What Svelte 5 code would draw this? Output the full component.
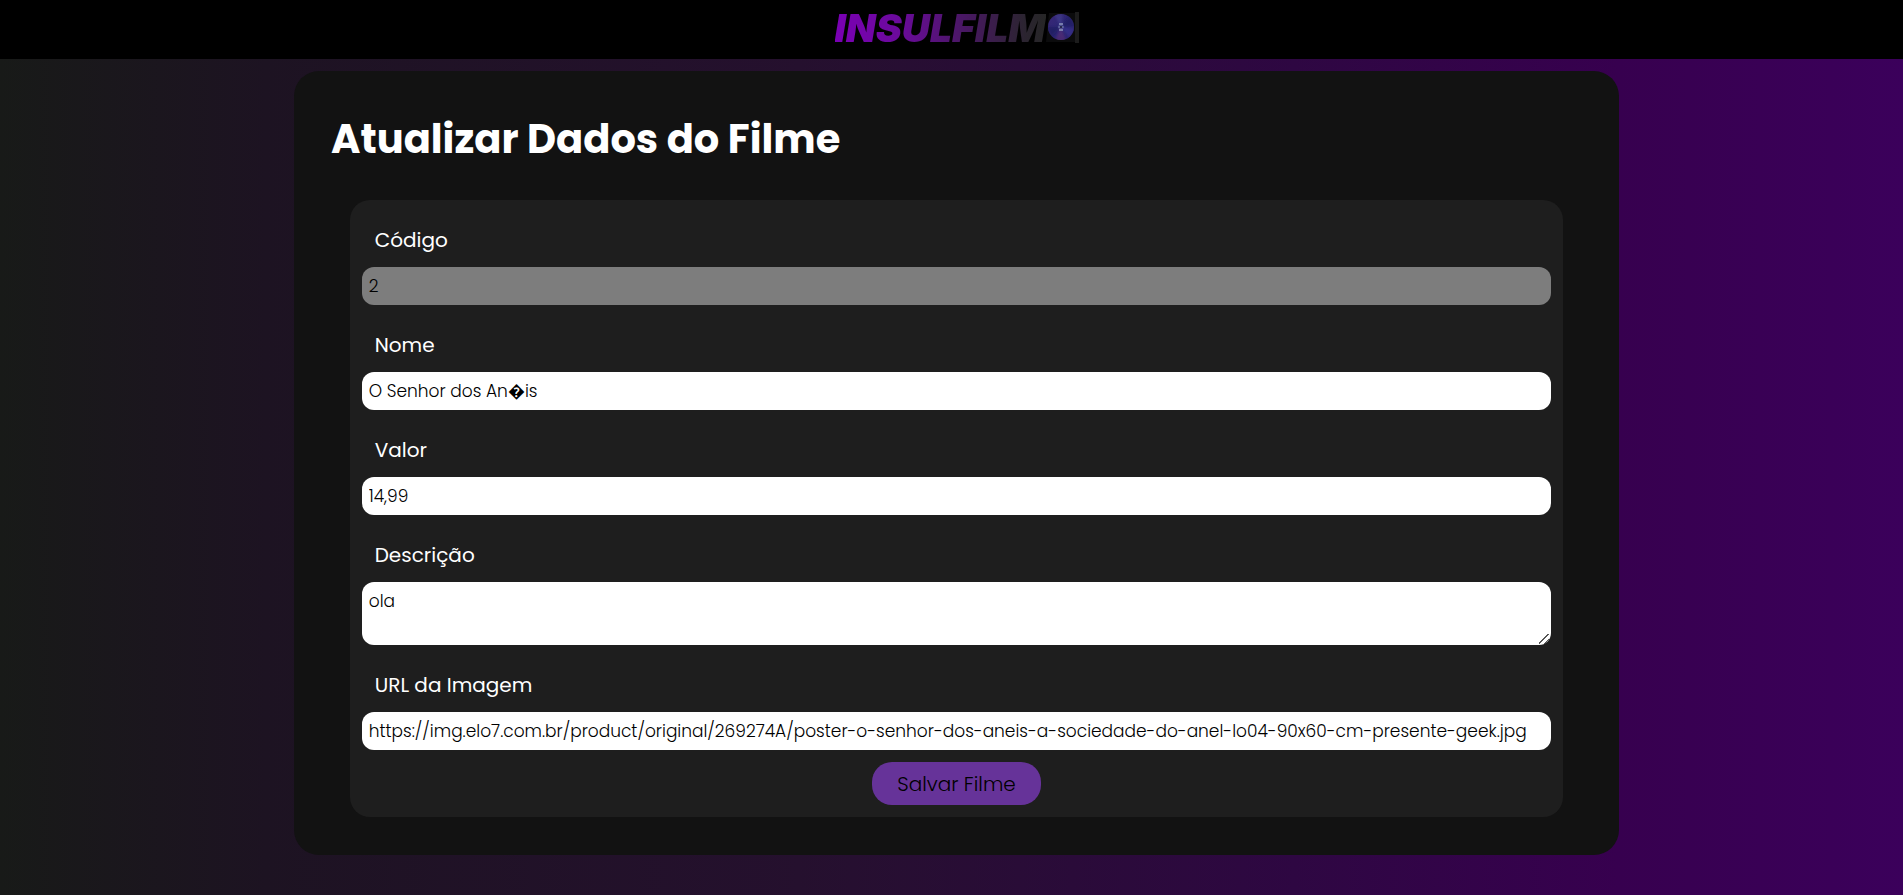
<script>
  let codigo = $state('2');
  let nome = $state('O Senhor dos An\uFFFDis');
  let valor = $state('14,99');
  let descricao = $state('ola');
  let imagem = $state(
    'https://img.elo7.com.br/product/original/269274A/poster-o-senhor-dos-aneis-a-sociedade-do-anel-lo04-90x60-cm-presente-geek.jpg'
  );
</script>

<div class="page">
  <header>
    <a class="logo" href="/" aria-label="Insulfilmo">
      <span class="wordmark">INSULFILM</span>
      <svg class="disc" width="33" height="31" viewBox="0 0 33 31" aria-hidden="true">
        <defs>
          <linearGradient id="disc-base" x1="0" y1="0" x2="1" y2="1">
            <stop offset="0" stop-color="#3f2a80" />
            <stop offset="0.5" stop-color="#29246f" />
            <stop offset="1" stop-color="#2e2478" />
          </linearGradient>
          <radialGradient id="disc-glow">
            <stop offset="0" stop-color="#8f9ac4" stop-opacity="0.7" />
            <stop offset="0.3" stop-color="#30307e" stop-opacity="0.2" />
            <stop offset="1" stop-color="#30246a" stop-opacity="0.3" />
          </radialGradient>
          <filter id="disc-soften" x="-10%" y="-10%" width="120%" height="120%">
            <feGaussianBlur stdDeviation="1" />
          </filter>
          <clipPath id="disc-clip"><circle cx="15" cy="15" r="13" /></clipPath>
        </defs>
        <path d="M3 1H29V30H0Z" fill="#0b0b0c" />
        <circle cx="15" cy="15" r="13" fill="url(#disc-base)" />
        <g clip-path="url(#disc-clip)">
          <g filter="url(#disc-soften)">
            <path d="M15 15 8 2H17Z" fill="#4a4896" opacity="0.6" />
            <path d="M15 15 24 3 29 14Z" fill="#161c5e" opacity="0.8" />
            <path d="M15 15 20 29H9Z" fill="#5c2b74" opacity="0.8" />
            <path d="M15 15H1L5 25Z" fill="#1c185c" opacity="0.8" />
            <path d="M15 15 29 17 24 26Z" fill="#3c38a5" opacity="0.5" />
          </g>
        </g>
        <circle cx="15" cy="15" r="13" fill="url(#disc-glow)" />
        <path d="M13 12h4M13 18h4" stroke="#8d97bd" stroke-width="1.5" />
        <path d="M12 15h6" stroke="#6d74a8" stroke-width="1" />
        <circle cx="15" cy="15" r="1" fill="#11132e" />
        <rect x="29" y="0" width="4" height="31" fill="#1c1c1c" />
      </svg>
    </a>
  </header>

  <main>
    <section class="card">
      <h1>Atualizar Dados do Filme</h1>
      <form onsubmit={(e) => e.preventDefault()}>
        <label for="codigo">Código</label>
        <input id="codigo" type="text" readonly bind:value={codigo} />

        <label for="nome">Nome</label>
        <input id="nome" type="text" bind:value={nome} />

        <label for="valor">Valor</label>
        <input id="valor" type="text" bind:value={valor} />

        <label for="descricao">Descrição</label>
        <textarea id="descricao" rows="2" bind:value={descricao}></textarea>

        <label for="imagem">URL da Imagem</label>
        <input id="imagem" type="text" bind:value={imagem} />

        <button type="submit">Salvar Filme</button>
      </form>
    </section>
  </main>
</div>

<style>
  :global(body) {
    background: #181a18;
  }

  .page {
    box-sizing: border-box;
    min-height: 100vh;
    background: linear-gradient(90deg, #181a18 0%, #1d1322 14%, #25102e 42%, #2e0742 68%, #37004f 85%, #3b005b 100%);
    font-family: Poppins, Inter, "Open Sans", sans-serif;
    color: #fff;
  }

  header {
    display: flex;
    justify-content: center;
    padding: 12px 0 16px 10px;
    background: #000;
  }

  .logo {
    display: flex;
    height: 31px;
    text-decoration: none;
  }

  .wordmark {
    font-family: Inter, sans-serif;
    font-size: 39px;
    font-weight: 900;
    font-style: italic;
    line-height: 31px;
    color: transparent;
    background: linear-gradient(90deg, #7a00b4 0%, #6b0a9c 30%, #481862 62%, #2b2430 90%, #262626 100%);
    background-clip: text;
    -webkit-background-clip: text;
  }

  .disc {
    display: block;
  }

  main {
    padding: 12px 0 40px 10px;
  }

  .card {
    box-sizing: border-box;
    width: 70%;
    margin: 0 auto;
    padding: 38px 37px;
    border-radius: 25px;
    background: #121212;
  }

  h1 {
    margin: 0 0 31px;
    font-size: 40px;
    font-weight: 700;
    line-height: 60px;
  }

  form {
    display: flex;
    flex-direction: column;
    box-sizing: border-box;
    width: 97%;
    margin: 0 auto;
    padding: 0 12px 12px;
    border-radius: 20px;
    background: #1e1e1e;
  }

  label {
    align-self: flex-start;
    margin: 25px 13px 12px;
    font-size: 20px;
    font-weight: 400;
    line-height: 30px;
  }

  input,
  textarea {
    display: block;
    box-sizing: border-box;
    width: 100%;
    margin: 0;
    padding: 7px;
    border: 0;
    border-radius: 12px;
    background: #fff;
    color: #000;
    font-family: inherit;
    font-size: 17px;
    font-weight: 300;
    line-height: 24px;
  }

  input {
    height: 38px;
  }

  input:read-only {
    background: #7d7d7d;
  }

  textarea {
    height: 63px;
    resize: both;
  }

  textarea::-webkit-resizer {
    background: linear-gradient(135deg, transparent 44%, #555 44% 51%, transparent 51% 72%, #555 72% 79%, transparent 79%)
      3px 4px / 10px 10px no-repeat;
  }

  button {
    align-self: center;
    margin-top: 12px;
    padding: 7px 25px 6px;
    border: 0;
    border-radius: 20px;
    background: #663399;
    color: #000;
    font-family: inherit;
    font-size: 20px;
    font-weight: 300;
    line-height: 30px;
  }
</style>
